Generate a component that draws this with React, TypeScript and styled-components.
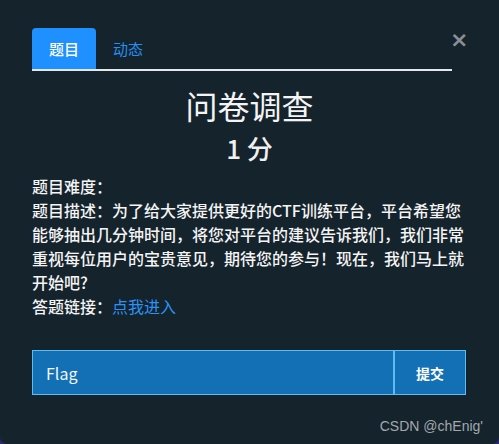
import React, { useState } from 'react';
import styled, { createGlobalStyle } from 'styled-components';

const GlobalStyle = createGlobalStyle`
  html, body {
    margin: 0;
    padding: 0;
    background: #2a2870;
  }
  body {
    font-family: "Noto Sans CJK SC", "Noto Sans", sans-serif;
  }
`;

const Modal = styled.div`
  width: 499px;
  height: 444px;
  box-sizing: border-box;
  background: #15232c;
  border-radius: 0 0 7px 7px;
  padding: 28px 32px 0 32px;
  display: flex;
  flex-direction: column;
  color: #f2f2f2;
`;

const Header = styled.div`
  display: flex;
  align-items: flex-start;
`;

const TabBar = styled.div`
  flex: 1;
  display: flex;
  border-bottom: 2px solid #e4e8ec;
`;

const Tab = styled.button<{ active: boolean }>`
  height: 41px;
  padding: 0 17px;
  border: none;
  border-radius: 4px 4px 0 0;
  background: ${p => (p.active ? '#1e90ff' : 'transparent')};
  color: ${p => (p.active ? '#ffffff' : '#2390f0')};
  font-family: "Noto Sans CJK SC", sans-serif;
  font-size: 15px;
  font-weight: ${p => (p.active ? 500 : 400)};
  line-height: 41px;
  cursor: pointer;
`;

const CloseButton = styled.button`
  width: 15px;
  margin: 1px 2px 0 -2px;
  padding: 0;
  border: none;
  background: transparent;
  color: #8a9095;
  font-family: "DejaVu Sans", sans-serif;
  font-size: 22px;
  font-weight: 700;
  line-height: 22px;
  text-align: left;
  cursor: pointer;
`;

const Title = styled.h1`
  margin: 14px 0 0;
  text-align: center;
  font-size: 32px;
  font-weight: 400;
  line-height: 40px;
  color: #f4f4f4;
`;

const Score = styled.h2`
  margin: 6px 0 0;
  text-align: center;
  font-size: 26px;
  font-weight: 500;
  line-height: 34px;
  color: #f0f0f0;
`;

const Info = styled.div`
  margin: 9px -4px 0 0;
  font-size: 16px;
  font-weight: 500;
  line-height: 24px;
  color: #f4f4f4;
`;

const Link = styled.a`
  color: #2a93f5;
  font-weight: 400;
  text-decoration: none;
`;

const FlagForm = styled.form`
  display: flex;
  margin-top: 32px;
  height: 45px;
  padding-right: 1px;
`;

const FlagInput = styled.input`
  flex: 1;
  min-width: 0;
  box-sizing: border-box;
  height: 45px;
  padding: 0 13px;
  border: 1px solid #5cbcf4;
  background: #1470b5;
  color: #ffffff;
  font-family: "Noto Sans CJK SC", sans-serif;
  font-size: 16px;
  outline: none;

  &::placeholder {
    color: #f2f6fa;
  }
`;

const SubmitButton = styled.button`
  width: 72px;
  height: 45px;
  box-sizing: border-box;
  border: 1px solid #5cbcf4;
  background: #1470b5;
  color: #ffffff;
  font-family: "Noto Sans CJK SC", sans-serif;
  font-size: 14px;
  font-weight: 700;
  cursor: pointer;
`;

const Watermark = styled.div`
  margin-top: auto;
  align-self: flex-end;
  margin-right: -16px;
  padding-bottom: 9px;
  font-family: "Liberation Sans", sans-serif;
  font-size: 14px;
  line-height: 18px;
  color: #a3a8ad;
`;

export default function App() {
  const [tab, setTab] = useState<'question' | 'activity'>('question');
  const [flag, setFlag] = useState('');

  return (
    <>
      <GlobalStyle />
      <Modal>
        <Header>
          <TabBar>
            <Tab active={tab === 'question'} onClick={() => setTab('question')}>题目</Tab>
            <Tab active={tab === 'activity'} onClick={() => setTab('activity')}>动态</Tab>
          </TabBar>
          <CloseButton aria-label="close">×</CloseButton>
        </Header>

        <Title>问卷调查</Title>
        <Score>1 分</Score>

        <Info>
          <div>题目难度：</div>
          <div>
            题目描述：为了给大家提供更好的CTF训练平台，平台希望您能够抽出几分钟时间，将您对平台的建议告诉我们，我们非常重视每位用户的宝贵意见，期待您的参与！现在，我们马上就开始吧?
          </div>
          <div>
            答题链接：<Link href="#">点我进入</Link>
          </div>
        </Info>

        <FlagForm onSubmit={e => e.preventDefault()}>
          <FlagInput placeholder="Flag" value={flag} onChange={e => setFlag(e.target.value)} />
          <SubmitButton type="submit">提交</SubmitButton>
        </FlagForm>

        <Watermark>CSDN @chEnig'</Watermark>
      </Modal>
    </>
  );
}
